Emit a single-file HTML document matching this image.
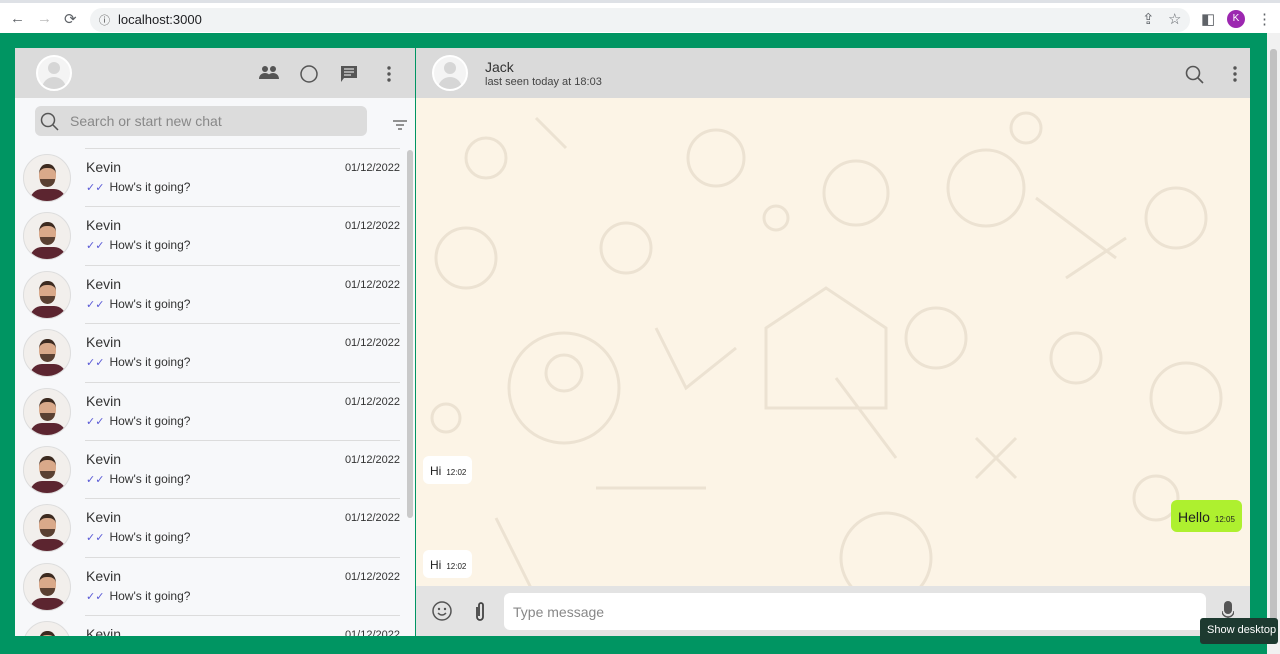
<!DOCTYPE html><html><head><meta charset="utf-8"><style>
*{box-sizing:border-box;margin:0;padding:0}
body{width:1280px;height:654px;overflow:hidden;font-family:"Liberation Sans",sans-serif;background:#009562;position:relative}
.top{position:absolute;left:0;top:0;width:1280px;height:33px;background:#fff;border-top:3px solid #dee1e6}
.url{position:absolute;left:90px;top:5px;width:1100px;height:24px;background:#f1f3f4;border-radius:12px;font-size:13px;color:#202124;padding:4px 0 0 28px}
.nav{position:absolute;top:7px;font-size:15px;color:#5f6368}
.sb{position:absolute;right:0;top:33px;width:13px;height:621px;background:#f1f1f1}
.sb i{position:absolute;left:3px;top:16px;width:7px;height:580px;background:#c1c1c1;border-radius:3px}
.left{position:absolute;left:15px;top:48px;width:400px;height:588px;background:#f7f8fa;overflow:hidden}
.lh{height:50px;background:#dbdbdb;position:relative}
.av{position:absolute;width:36px;height:36px;border-radius:50%;background:#f4f4f4;border:2px solid #fff;overflow:hidden}
.av:before{content:"";position:absolute;left:10px;top:5px;width:12px;height:12px;border-radius:50%;background:#d6d6d6}
.av:after{content:"";position:absolute;left:4px;top:20px;width:24px;height:18px;border-radius:12px 12px 0 0;background:#d6d6d6}
.search{position:absolute;left:20px;top:58px;width:332px;height:30px;background:#dcdcdc;border-radius:6px;color:#888;font-size:14px;padding:7px 0 0 35px}
.row{position:absolute;left:0;width:393px;height:58px}
.row .ph{position:absolute;left:8px;top:6px;width:48px;height:48px;border-radius:50%;overflow:hidden;background:#f2efec;border:1px solid #ddd}
.ph i{position:absolute;left:15px;top:9px;width:17px;height:22px;border-radius:45%;background:#d9a98a;border-top:4px solid #3c2a20}
.ph i:after{content:"";position:absolute;left:1px;top:11px;width:15px;height:8px;border-radius:0 0 8px 8px;background:#5a4032}
.ph s{position:absolute;left:6px;top:34px;width:36px;height:20px;border-radius:12px 12px 0 0;background:#5c2530}
.row .ln{position:absolute;left:70px;right:8px;top:0;border-top:1px solid #dcdcdc}
.row .n{position:absolute;left:71px;top:11px;font-size:14px;color:#333}
.row .d{position:absolute;right:8px;top:14px;font-size:11px;color:#333}
.row .m{position:absolute;left:71px;top:32px;font-size:12px;color:#333}
.row .m b{color:#5b5bd6;font-weight:normal;font-size:11px;margin-right:5px}
.lsb{position:absolute;left:392px;top:102px;width:6px;height:368px;background:#c9c9c9;border-radius:3px}
.right{position:absolute;left:416px;top:48px;width:834px;height:588px;background:#fcf4e6;overflow:hidden}
.rh{height:50px;background:#dadada;position:relative}
.msg{position:absolute;background:#fff;border-radius:6px;font-size:12px;color:#222;padding:8px 6px 0 7px;height:28px}
.msg small{font-size:8px;margin-left:5px}
.foot{position:absolute;left:0;top:538px;width:834px;height:50px;background:#e3e3e3}
.inp{position:absolute;left:88px;top:7px;width:702px;height:37px;background:#fff;border-radius:6px;color:#888;font-size:14px;padding:11px 0 0 9px}
.tip{position:absolute;left:1200px;top:618px;width:78px;height:26px;background:#1d3a30;color:#fff;font-size:11px;padding:6px 0 0 7px;border-radius:3px}
svg{position:absolute}
</style></head><body>
<div class="top">
<span class="nav" style="left:10px">←</span><span class="nav" style="left:37px;color:#bbb">→</span><span class="nav" style="left:64px">⟳</span>
<div class="url"><span style="position:absolute;left:9px;top:4px;font-size:11px;color:#555">ⓘ</span>localhost:3000</div>
<span class="nav" style="left:1142px">⇪</span><span class="nav" style="left:1168px">☆</span><span class="nav" style="left:1201px">◧</span>
<span style="position:absolute;left:1227px;top:7px;width:18px;height:18px;border-radius:50%;background:#9c27b0;color:#fff;font-size:10px;text-align:center;line-height:18px">K</span>
<span class="nav" style="left:1257px">⋮</span>
</div>
<div class="sb"><i></i></div>
<div class="left">
<div class="lh">
<div class="av" style="left:21px;top:7px"></div>
<svg style="left:244px;top:17px" width="20" height="16" viewBox="0 0 20 16"><circle cx="6" cy="4" r="3" fill="#555"/><circle cx="14" cy="4" r="3" fill="#555"/><path d="M0 14c0-4 3-6 6-6s6 2 6 6zM8 14c0-4 3-6 6-6s6 2 6 6z" fill="#555"/></svg>
<svg style="left:285px;top:17px" width="18" height="18"><circle cx="9" cy="9" r="8" fill="none" stroke="#555" stroke-width="1.5"/></svg>
<svg style="left:325px;top:17px" width="18" height="18" viewBox="0 0 18 18"><path d="M1 1h16v12H4l-3 4z" fill="#555"/><path d="M4 4h10M4 7h10M4 10h7" stroke="#dbdbdb" stroke-width="1.3"/></svg>
<svg style="left:372px;top:18px" width="4" height="16"><circle cx="2" cy="2" r="1.7" fill="#555"/><circle cx="2" cy="8" r="1.7" fill="#555"/><circle cx="2" cy="14" r="1.7" fill="#555"/></svg>
</div>
<div class="search">Search or start new chat</div>
<svg style="left:25px;top:64px" width="20" height="20"><circle cx="8" cy="8" r="6.5" fill="none" stroke="#555" stroke-width="1.5"/><path d="M13 13l5 5" stroke="#555" stroke-width="1.5"/></svg>
<svg style="left:378px;top:72px" width="14" height="10"><path d="M0 1h14M3 5h8M5 9h4" stroke="#555" stroke-width="1.3"/></svg>
<div class="row" style="top:100px"><div class="ln"></div><div class="ph"><s></s><i></i></div><div class="n">Kevin</div><div class="d">01/12/2022</div><div class="m"><b>✓✓</b>How's it going?</div></div>
<div class="row" style="top:158px"><div class="ln"></div><div class="ph"><s></s><i></i></div><div class="n">Kevin</div><div class="d">01/12/2022</div><div class="m"><b>✓✓</b>How's it going?</div></div>
<div class="row" style="top:217px"><div class="ln"></div><div class="ph"><s></s><i></i></div><div class="n">Kevin</div><div class="d">01/12/2022</div><div class="m"><b>✓✓</b>How's it going?</div></div>
<div class="row" style="top:275px"><div class="ln"></div><div class="ph"><s></s><i></i></div><div class="n">Kevin</div><div class="d">01/12/2022</div><div class="m"><b>✓✓</b>How's it going?</div></div>
<div class="row" style="top:334px"><div class="ln"></div><div class="ph"><s></s><i></i></div><div class="n">Kevin</div><div class="d">01/12/2022</div><div class="m"><b>✓✓</b>How's it going?</div></div>
<div class="row" style="top:392px"><div class="ln"></div><div class="ph"><s></s><i></i></div><div class="n">Kevin</div><div class="d">01/12/2022</div><div class="m"><b>✓✓</b>How's it going?</div></div>
<div class="row" style="top:450px"><div class="ln"></div><div class="ph"><s></s><i></i></div><div class="n">Kevin</div><div class="d">01/12/2022</div><div class="m"><b>✓✓</b>How's it going?</div></div>
<div class="row" style="top:509px"><div class="ln"></div><div class="ph"><s></s><i></i></div><div class="n">Kevin</div><div class="d">01/12/2022</div><div class="m"><b>✓✓</b>How's it going?</div></div>
<div class="row" style="top:567px"><div class="ln"></div><div class="ph"><s></s><i></i></div><div class="n">Kevin</div><div class="d">01/12/2022</div><div class="m"><b>✓✓</b>How's it going?</div></div>
<div class="lsb"></div>
</div>
<div class="right">
<div class="rh">
<div class="av" style="left:16px;top:7px"></div>
<div style="position:absolute;left:69px;top:11px;font-size:14px;color:#333">Jack</div>
<div style="position:absolute;left:69px;top:28px;font-size:11px;color:#444">last seen today at 18:03</div>
<svg style="left:769px;top:17px" width="20" height="20"><circle cx="8" cy="8" r="6.5" fill="none" stroke="#555" stroke-width="1.6"/><path d="M13 13l5 5" stroke="#555" stroke-width="1.6"/></svg>
<svg style="left:817px;top:18px" width="4" height="16"><circle cx="2" cy="2" r="1.7" fill="#555"/><circle cx="2" cy="8" r="1.7" fill="#555"/><circle cx="2" cy="14" r="1.7" fill="#555"/></svg>
</div>
<svg style="left:0;top:50px" width="834" height="488" fill="none" stroke="#ece2d2" stroke-width="3">
<circle cx="148" cy="290" r="55"/><circle cx="148" cy="275" r="18"/><path d="M350 230l60-40 60 40v80H350z"/><circle cx="440" cy="95" r="32"/><circle cx="570" cy="90" r="38"/><circle cx="50" cy="160" r="30"/><path d="M620 100l80 60M650 180l60-40"/><circle cx="470" cy="460" r="45"/><circle cx="770" cy="300" r="35"/><path d="M180 390h110M80 420l40 80"/><circle cx="300" cy="60" r="28"/><circle cx="760" cy="120" r="30"/><path d="M240 230l30 60 50-40"/>
<circle cx="70" cy="60" r="20"/><circle cx="210" cy="150" r="25"/><circle cx="520" cy="240" r="30"/><circle cx="660" cy="260" r="25"/><circle cx="740" cy="400" r="22"/><circle cx="30" cy="320" r="14"/><path d="M560 340l40 40M600 340l-40 40"/><circle cx="360" cy="120" r="12"/><circle cx="610" cy="30" r="15"/><path d="M120 20l30 30M420 280l60 80"/>
</svg>
<div class="msg" style="left:7px;top:408px">Hi<small>12:02</small></div>
<div class="msg" style="left:755px;top:452px;background:#aef02f;height:32px;padding:9px 7px 0 7px;font-size:14px">Hello<small>12:05</small></div>
<div class="msg" style="left:7px;top:502px">Hi<small>12:02</small></div>
<div class="foot">
<svg style="left:16px;top:15px" width="20" height="20"><circle cx="10" cy="10" r="9" fill="none" stroke="#555" stroke-width="1.5"/><circle cx="7" cy="8" r="1.2" fill="#555"/><circle cx="13" cy="8" r="1.2" fill="#555"/><path d="M6 12q4 4 8 0" stroke="#555" stroke-width="1.5" fill="none"/></svg>
<svg style="left:58px;top:15px" width="12" height="22"><path d="M3 6v10a3 3 0 006 0V4a2 2 0 00-4 0v11" fill="none" stroke="#444" stroke-width="1.8"/></svg>
<div class="inp">Type message</div>
<svg style="left:806px;top:15px" width="12" height="20"><rect x="2" y="0" width="8" height="13" rx="4" fill="#555"/><path d="M0 10a6 6 0 0012 0M6 16v4" stroke="#555" stroke-width="1.4" fill="none"/></svg>
</div>
</div>
<div class="tip">Show desktop</div>
</body></html>
